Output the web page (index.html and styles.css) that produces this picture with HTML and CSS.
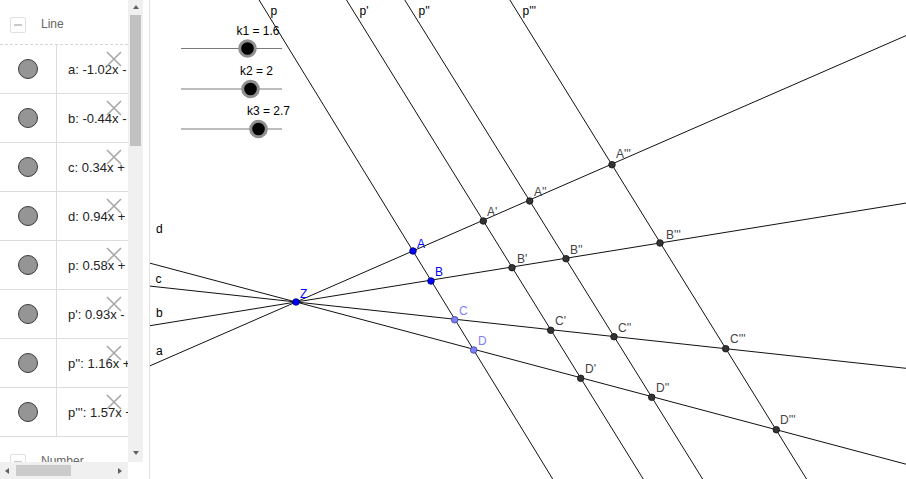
FILE: index.html
```html
<!DOCTYPE html>
<html>
<head>
<meta charset="utf-8">
<link rel="stylesheet" href="styles.css">
</head>
<body>
<div class="app">
  <div class="algebra">
    <div class="list">
      <div class="group"><span class="toggle"></span><span class="group-name">Line</span></div>
      <div class="row"><div class="marble-cell"><span class="marble"></span></div><div class="def">a: -1.02x - 1.67y = -669.57</div><svg class="del" viewBox="0 0 16 16"><path d="M1 1L15 15M15 1L1 15"/></svg></div>
      <div class="row"><div class="marble-cell"><span class="marble"></span></div><div class="def">b: -0.44x - 1.92y = -653.21</div><svg class="del" viewBox="0 0 16 16"><path d="M1 1L15 15M15 1L1 15"/></svg></div>
      <div class="row"><div class="marble-cell"><span class="marble"></span></div><div class="def">c: 0.34x + 1.99y = 703.61</div><svg class="del" viewBox="0 0 16 16"><path d="M1 1L15 15M15 1L1 15"/></svg></div>
      <div class="row"><div class="marble-cell"><span class="marble"></span></div><div class="def">d: 0.94x + 1.62y = 760.3</div><svg class="del" viewBox="0 0 16 16"><path d="M1 1L15 15M15 1L1 15"/></svg></div>
      <div class="row"><div class="marble-cell"><span class="marble"></span></div><div class="def">p: 0.58x + 0.56y = 217.38</div><svg class="del" viewBox="0 0 16 16"><path d="M1 1L15 15M15 1L1 15"/></svg></div>
      <div class="row"><div class="marble-cell"><span class="marble"></span></div><div class="def">p': 0.93x - 1.57y = 562.12</div><svg class="del" viewBox="0 0 16 16"><path d="M1 1L15 15M15 1L1 15"/></svg></div>
      <div class="row"><div class="marble-cell"><span class="marble"></span></div><div class="def">p'': 1.16x + 1.87y = 802.4</div><svg class="del" viewBox="0 0 16 16"><path d="M1 1L15 15M15 1L1 15"/></svg></div>
      <div class="row"><div class="marble-cell"><span class="marble"></span></div><div class="def">p''': 1.57x + 2.53y = 1260.1</div><svg class="del" viewBox="0 0 16 16"><path d="M1 1L15 15M15 1L1 15"/></svg></div>
      <div class="group"><span class="toggle"></span><span class="group-name">Number</span></div>
    </div>
    <div class="vscroll">
      <span class="arrow up"></span>
      <span class="vthumb"></span>
      <span class="vspace"></span>
      <span class="arrow down"></span>
    </div>
    <div class="hscroll">
      <span class="arrow left"></span>
      <span class="hthumb"></span>
      <span class="hspace"></span>
      <span class="arrow right"></span>
    </div>
    <div class="corner"></div>
  </div>
  <div class="splitter"></div>
  <div class="graphics">
    <svg class="canvas" width="756" height="479" viewBox="150 0 756 479">
      <g class="lines">
        <line x1="150" y1="365.8" x2="906" y2="35.6"/>
        <line x1="150" y1="325.7" x2="906" y2="203.1"/>
        <line x1="150" y1="286.1" x2="906" y2="368.3"/>
        <line x1="150" y1="263.2" x2="906" y2="464.2"/>
        <line x1="259.1" y1="0" x2="552.7" y2="479"/>
        <line x1="346.5" y1="0" x2="643.2" y2="479"/>
        <line x1="404.8" y1="0" x2="702.6" y2="479"/>
        <line x1="509.9" y1="0" x2="806.5" y2="479"/>
      </g>
      <g class="sliders">
        <line x1="181" y1="48.5" x2="282" y2="48.5"/>
        <line x1="181" y1="89" x2="282" y2="89"/>
        <line x1="181" y1="129" x2="282" y2="129"/>
        <circle cx="247.5" cy="48.5" r="7.8"/>
        <circle cx="250.5" cy="89" r="7.8"/>
        <circle cx="258.5" cy="129" r="7.8"/>
      </g>
      <g class="slider-labels">
        <text x="236.5" y="35">k1 = 1.6</text>
        <text x="240" y="74.5">k2 = 2</text>
        <text x="247" y="115">k3 = 2.7</text>
      </g>
      <g class="line-labels">
        <text x="156" y="233">d</text>
        <text x="155.5" y="283">c</text>
        <text x="156" y="317">b</text>
        <text x="156" y="355">a</text>
        <text x="270.5" y="15">p</text>
        <text x="359.5" y="15">p'</text>
        <text x="418.5" y="15">p''</text>
        <text x="522.5" y="15">p'''</text>
      </g>
      <g class="pts dep">
        <circle cx="483.3" cy="221" r="3.3"/>
        <circle cx="529.7" cy="201" r="3.3"/>
        <circle cx="612" cy="164.7" r="3.3"/>
        <circle cx="512" cy="267.7" r="3.3"/>
        <circle cx="566" cy="258.7" r="3.3"/>
        <circle cx="660" cy="243" r="3.3"/>
        <circle cx="550.7" cy="330.3" r="3.3"/>
        <circle cx="614" cy="336.7" r="3.3"/>
        <circle cx="725.7" cy="348.7" r="3.3"/>
        <circle cx="580.7" cy="378.3" r="3.3"/>
        <circle cx="651.7" cy="397.3" r="3.3"/>
        <circle cx="776.3" cy="429.7" r="3.3"/>
      </g>
      <g class="pts free">
        <circle cx="296" cy="302" r="3.3"/>
        <circle cx="413" cy="251" r="3.3"/>
        <circle cx="431" cy="281" r="3.3"/>
      </g>
      <g class="pts onpath">
        <circle cx="454.7" cy="319.7" r="3.3"/>
        <circle cx="473.7" cy="350" r="3.3"/>
      </g>
      <g class="lbl dep-l">
        <text x="487" y="215.5">A'</text>
        <text x="534" y="195.5">A''</text>
        <text x="616" y="157.5">A'''</text>
        <text x="517" y="262.5">B'</text>
        <text x="570" y="253.5">B''</text>
        <text x="666" y="238.5">B'''</text>
        <text x="555" y="324.5">C'</text>
        <text x="618" y="331.5">C''</text>
        <text x="730" y="342.5">C'''</text>
        <text x="585" y="372.5">D'</text>
        <text x="656" y="391.5">D''</text>
        <text x="780" y="423.5">D'''</text>
      </g>
      <g class="lbl free-l">
        <text x="300" y="297.5">Z</text>
        <text x="417" y="247.5">A</text>
        <text x="435" y="275.5">B</text>
      </g>
      <g class="lbl onpath-l">
        <text x="459" y="314.5">C</text>
        <text x="478" y="344.5">D</text>
      </g>
    </svg>
  </div>
</div>
</body>
</html>
```
FILE: styles.css
```css
html, body {
  margin: 0;
  padding: 0;
  background: #fff;
}
body {
  width: 906px;
  height: 479px;
  overflow: hidden;
  font-family: "Liberation Sans", Arial, sans-serif;
}
.app {
  display: flex;
  height: 479px;
}
.algebra {
  width: 143px;
  flex: none;
  display: grid;
  grid-template-columns: 128px 15px;
  grid-template-rows: 462px 17px;
}
.list {
  overflow: hidden;
  background: #fff;
}
.group {
  height: 27px;
  padding-top: 17px;
  display: flex;
  align-items: flex-start;
  border-bottom: 1px dashed #d6d6d6;
}
.toggle {
  width: 14px;
  height: 14px;
  margin-left: 10px;
  border: 1px solid #e0e0e0;
  border-radius: 2px;
  display: flex;
  align-items: center;
  justify-content: center;
  flex: none;
}
.toggle::before {
  content: "";
  width: 8px;
  height: 2px;
  background: #c8c8c8;
}
.group-name {
  margin-left: 15px;
  font-size: 12px;
  line-height: 15px;
  color: #666;
}
.row {
  position: relative;
  height: 48px;
  display: flex;
  border-bottom: 1px solid #dcdcdc;
}
.marble-cell {
  width: 56px;
  flex: none;
  border-right: 1px solid #dcdcdc;
  display: flex;
  align-items: center;
  justify-content: center;
}
.marble {
  width: 18px;
  height: 18px;
  border-radius: 50%;
  background: #959595;
  border: 1px solid #3a3a3a;
}
.def {
  padding-left: 11px;
  font-size: 13px;
  color: #222;
  white-space: nowrap;
  display: flex;
  align-items: center;
}
.del {
  position: absolute;
  left: 106px;
  top: 6px;
  width: 16px;
  height: 16px;
  stroke: #a8a8a8;
  stroke-width: 1.6;
  fill: none;
}
.vscroll {
  background: #f0f0f0;
  display: flex;
  flex-direction: column;
  align-items: center;
}
.vthumb {
  width: 11px;
  height: 131px;
  background: #c1c1c1;
}
.vspace { flex: 1; }
.hscroll {
  background: #f0f0f0;
  display: flex;
  align-items: center;
}
.hthumb {
  width: 55px;
  height: 11px;
  background: #cbcbcb;
}
.hspace { flex: 1; }
.corner { background: #fff; }
.arrow {
  width: 0;
  height: 0;
  flex: none;
}
.arrow.up {
  margin: 5px 0 6px;
  border-left: 3.5px solid transparent;
  border-right: 3.5px solid transparent;
  border-bottom: 4px solid #606060;
}
.arrow.down {
  margin: 0 0 7px;
  border-left: 3.5px solid transparent;
  border-right: 3.5px solid transparent;
  border-top: 4px solid #606060;
}
.arrow.left {
  margin: 0 7px 0 5px;
  border-top: 3.5px solid transparent;
  border-bottom: 3.5px solid transparent;
  border-right: 4px solid #606060;
}
.arrow.right {
  margin: 0 6px 0 0;
  border-top: 3.5px solid transparent;
  border-bottom: 3.5px solid transparent;
  border-left: 4px solid #606060;
}
.splitter {
  width: 6px;
  flex: none;
  border-right: 1px solid #e2e2e2;
  background: #fff;
}
.graphics {
  flex: 1;
  overflow: hidden;
}
.canvas {
  display: block;
}
.lines line {
  stroke: #111;
  stroke-width: 1;
}
.sliders line {
  stroke: #7a7a7a;
  stroke-width: 1;
}
.sliders circle {
  fill: #000;
  stroke: #8f8f8f;
  stroke-width: 3;
}
.canvas text {
  font-family: "Liberation Sans", Arial, sans-serif;
  font-size: 12px;
}
.slider-labels text, .line-labels text {
  fill: #000;
}
.pts circle {
  stroke-width: 0.8;
}
.pts.dep circle {
  fill: #333;
  stroke: #111;
}
.pts.free circle {
  fill: #0000ff;
  stroke: #000066;
}
.pts.onpath circle {
  fill: #7f7fff;
  stroke: #3d3d8f;
}
.dep-l text { fill: #444; }
.free-l text { fill: #0000ff; }
.onpath-l text { fill: #7f7fff; }
```
